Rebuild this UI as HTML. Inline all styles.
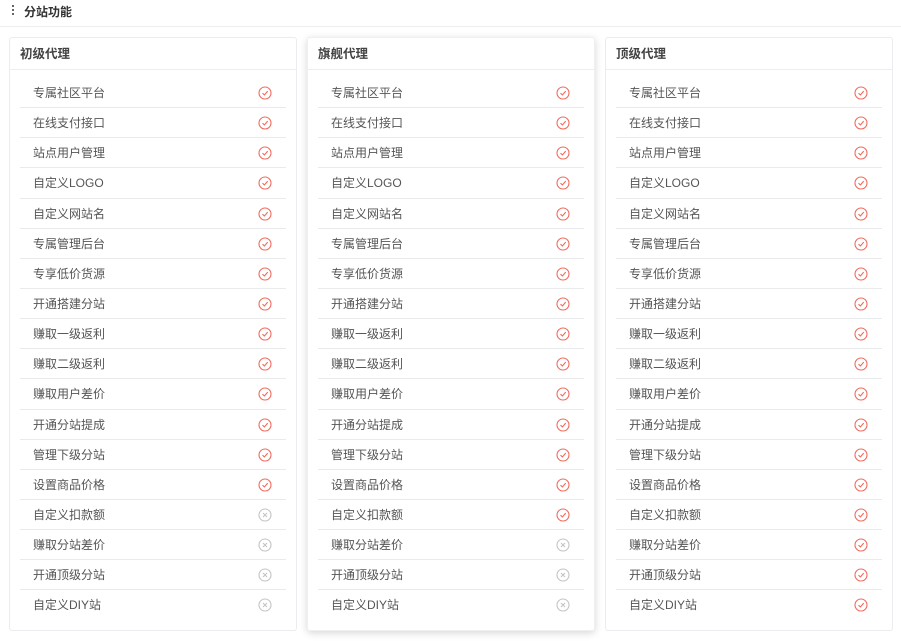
<!DOCTYPE html>
<html><head><meta charset="utf-8">
<style>
*{margin:0;padding:0;box-sizing:border-box}
body{width:901px;height:641px;background:#fff;font-family:"Liberation Sans","Noto Sans CJK SC",sans-serif;position:relative;overflow:hidden;color:#555}
.top{position:absolute;left:0;top:0;width:901px;height:27px;border-bottom:1px solid #eceef1}
.top .dots{position:absolute;left:12px;top:5px}
.top .dots i{display:block;width:2px;height:2px;background:#666;margin-bottom:2px}
.top .t{position:absolute;left:24px;top:3px;font-size:12px;font-weight:bold;color:#333}
.card{position:absolute;top:37px;width:288px;height:594px;border:1px solid #eaecef;border-radius:3px;background:#fff}
.card.sh{box-shadow:0 2px 8px rgba(0,0,0,.16);border-color:#f0f0f0}
.hd{height:32px;border-bottom:1px solid #eceef1;font-size:12.5px;font-weight:bold;color:#444;padding:5px 0 0 10px}
.list{position:absolute;left:10px;right:10px;top:40px}
.r{height:30.15px;border-bottom:1px solid #e8eaec;position:relative;font-size:12px;line-height:30px;padding-left:13px;color:#555}
.r:last-child{border-bottom:none}
.r svg{position:absolute;left:238px;top:8px;width:14px;height:14px}
</style></head><body>
<svg width="0" height="0" style="position:absolute">
<defs>
<g id="ok"><circle cx="7" cy="7" r="6" fill="none" stroke="#f06a5c" stroke-width="1.1"/><path d="M4.5 7.1 L6.4 9 L9.7 5.1" fill="none" stroke="#f06a5c" stroke-width="1.1"/></g>
<g id="no"><circle cx="7" cy="7" r="6" fill="none" stroke="#c4c4c4" stroke-width="1.1"/><path d="M5 5 L9 9 M9 5 L5 9" fill="none" stroke="#c4c4c4" stroke-width="1.1"/></g>
</defs></svg>
<div class="top"><div class="dots"><i></i><i></i><i></i></div><div class="t">分站功能</div></div>

<div class="card" style="left:9px"><div class="hd">初级代理</div><div class="list">
<div class="r">专属社区平台<svg><use href="#ok"/></svg></div>
<div class="r">在线支付接口<svg><use href="#ok"/></svg></div>
<div class="r">站点用户管理<svg><use href="#ok"/></svg></div>
<div class="r">自定义LOGO<svg><use href="#ok"/></svg></div>
<div class="r">自定义网站名<svg><use href="#ok"/></svg></div>
<div class="r">专属管理后台<svg><use href="#ok"/></svg></div>
<div class="r">专享低价货源<svg><use href="#ok"/></svg></div>
<div class="r">开通搭建分站<svg><use href="#ok"/></svg></div>
<div class="r">赚取一级返利<svg><use href="#ok"/></svg></div>
<div class="r">赚取二级返利<svg><use href="#ok"/></svg></div>
<div class="r">赚取用户差价<svg><use href="#ok"/></svg></div>
<div class="r">开通分站提成<svg><use href="#ok"/></svg></div>
<div class="r">管理下级分站<svg><use href="#ok"/></svg></div>
<div class="r">设置商品价格<svg><use href="#ok"/></svg></div>
<div class="r">自定义扣款额<svg><use href="#no"/></svg></div>
<div class="r">赚取分站差价<svg><use href="#no"/></svg></div>
<div class="r">开通顶级分站<svg><use href="#no"/></svg></div>
<div class="r">自定义DIY站<svg><use href="#no"/></svg></div>
</div></div>

<div class="card sh" style="left:307px"><div class="hd">旗舰代理</div><div class="list">
<div class="r">专属社区平台<svg><use href="#ok"/></svg></div>
<div class="r">在线支付接口<svg><use href="#ok"/></svg></div>
<div class="r">站点用户管理<svg><use href="#ok"/></svg></div>
<div class="r">自定义LOGO<svg><use href="#ok"/></svg></div>
<div class="r">自定义网站名<svg><use href="#ok"/></svg></div>
<div class="r">专属管理后台<svg><use href="#ok"/></svg></div>
<div class="r">专享低价货源<svg><use href="#ok"/></svg></div>
<div class="r">开通搭建分站<svg><use href="#ok"/></svg></div>
<div class="r">赚取一级返利<svg><use href="#ok"/></svg></div>
<div class="r">赚取二级返利<svg><use href="#ok"/></svg></div>
<div class="r">赚取用户差价<svg><use href="#ok"/></svg></div>
<div class="r">开通分站提成<svg><use href="#ok"/></svg></div>
<div class="r">管理下级分站<svg><use href="#ok"/></svg></div>
<div class="r">设置商品价格<svg><use href="#ok"/></svg></div>
<div class="r">自定义扣款额<svg><use href="#ok"/></svg></div>
<div class="r">赚取分站差价<svg><use href="#no"/></svg></div>
<div class="r">开通顶级分站<svg><use href="#no"/></svg></div>
<div class="r">自定义DIY站<svg><use href="#no"/></svg></div>
</div></div>

<div class="card" style="left:605px"><div class="hd">顶级代理</div><div class="list">
<div class="r">专属社区平台<svg><use href="#ok"/></svg></div>
<div class="r">在线支付接口<svg><use href="#ok"/></svg></div>
<div class="r">站点用户管理<svg><use href="#ok"/></svg></div>
<div class="r">自定义LOGO<svg><use href="#ok"/></svg></div>
<div class="r">自定义网站名<svg><use href="#ok"/></svg></div>
<div class="r">专属管理后台<svg><use href="#ok"/></svg></div>
<div class="r">专享低价货源<svg><use href="#ok"/></svg></div>
<div class="r">开通搭建分站<svg><use href="#ok"/></svg></div>
<div class="r">赚取一级返利<svg><use href="#ok"/></svg></div>
<div class="r">赚取二级返利<svg><use href="#ok"/></svg></div>
<div class="r">赚取用户差价<svg><use href="#ok"/></svg></div>
<div class="r">开通分站提成<svg><use href="#ok"/></svg></div>
<div class="r">管理下级分站<svg><use href="#ok"/></svg></div>
<div class="r">设置商品价格<svg><use href="#ok"/></svg></div>
<div class="r">自定义扣款额<svg><use href="#ok"/></svg></div>
<div class="r">赚取分站差价<svg><use href="#ok"/></svg></div>
<div class="r">开通顶级分站<svg><use href="#ok"/></svg></div>
<div class="r">自定义DIY站<svg><use href="#ok"/></svg></div>
</div></div>
</body></html>
